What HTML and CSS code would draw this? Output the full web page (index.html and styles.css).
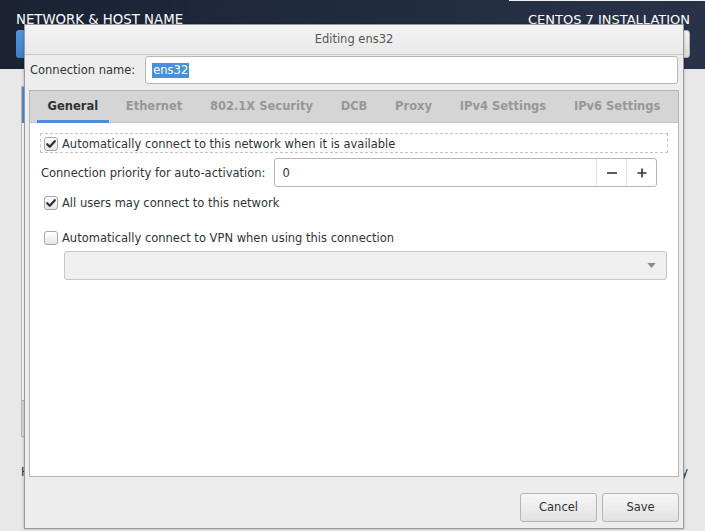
FILE: index.html
```html
<!DOCTYPE html>
<html>
<head>
<meta charset="utf-8">
<link rel="stylesheet" href="styles.css">
</head>
<body>
<div class="screen">
  <header class="topbar">
    <div class="tb-left">
      <div class="tb-title">NETWORK &amp; HOST NAME</div>
      <div class="done-btn">Done</div>
    </div>
    <div class="tb-right">
      <div class="tb-strip"></div>
      <div class="tb-install">CENTOS 7 INSTALLATION</div>
      <div class="kbd-btn">us</div>
    </div>
  </header>
  <main class="spoke">
    <div class="dev-panel">
      <div class="dev-sel"></div>
      <div class="dev-list"></div>
      <div class="dev-tools"></div>
    </div>
    <div class="host-row"><span class="host-label">Host name:</span><span class="apply">Apply</span></div>
  </main>

  <div class="dialog">
    <div class="dlg-title">Editing ens32</div>
    <div class="conn-row">
      <span class="conn-label">Connection name:</span>
      <div class="entry"><span class="sel-text">ens32</span></div>
    </div>
    <div class="notebook">
      <div class="tabs">
        <div class="tab active">General</div>
        <div class="tab">Ethernet</div>
        <div class="tab">802.1X Security</div>
        <div class="tab">DCB</div>
        <div class="tab">Proxy</div>
        <div class="tab">IPv4 Settings</div>
        <div class="tab">IPv6 Settings</div>
      </div>
      <div class="page">
        <div class="cb-row focus">
          <span class="check on"><svg viewBox="0 0 14 14" width="14" height="14"><path d="M3.2 7.2 L5.8 9.8 L10.8 4.2" fill="none" stroke="#2e3436" stroke-width="2.3" stroke-linecap="round" stroke-linejoin="round"/></svg></span>
          <span>Automatically connect to this network when it is available</span>
        </div>
        <div class="prio-row">
          <span class="prio-label">Connection priority for auto-activation:</span>
          <div class="spin">
            <span class="spin-val">0</span>
            <span class="spin-btn">
              <svg viewBox="0 0 12 12" width="12" height="12"><path d="M1 6 H11" stroke="#2e3436" stroke-width="1.6"/></svg>
            </span>
            <span class="spin-btn">
              <svg viewBox="0 0 12 12" width="12" height="12"><path d="M1.5 6 H10.5 M6 1.5 V10.5" stroke="#2e3436" stroke-width="1.6"/></svg>
            </span>
          </div>
        </div>
        <div class="cb-row">
          <span class="check on"><svg viewBox="0 0 14 14" width="14" height="14"><path d="M3.2 7.2 L5.8 9.8 L10.8 4.2" fill="none" stroke="#2e3436" stroke-width="2.3" stroke-linecap="round" stroke-linejoin="round"/></svg></span>
          <span>All users may connect to this network</span>
        </div>
        <div class="cb-row vpn">
          <span class="check"></span>
          <span>Automatically connect to VPN when using this connection</span>
        </div>
        <div class="combo">
          <svg viewBox="0 0 10 6" width="9" height="5"><path d="M0 0 H10 L5 6 Z" fill="#8a8a8a"/></svg>
        </div>
      </div>
    </div>
    <div class="actions">
      <div class="btn">Cancel</div>
      <div class="btn">Save</div>
    </div>
  </div>
</div>
</body>
</html>
```

FILE: styles.css
```css
* { box-sizing: border-box; }
html, body { margin: 0; padding: 0; }
body {
  width: 705px;
  height: 531px;
  overflow: hidden;
  font-family: "DejaVu Sans", "Liberation Sans", sans-serif;
  font-size: 11.5px;
  color: #2e3436;
  background: #e8e8e8;
}
.screen {
  position: relative;
  width: 705px;
  height: 531px;
  display: flex;
  flex-direction: column;
}
.topbar {
  height: 69px;
  flex: none;
  display: flex;
  justify-content: space-between;
  background: linear-gradient(100deg, #1a2234 0%, #212b40 50%, #283349 100%);
}
.tb-left {
  padding: 12px 0 0 16px;
  display: flex;
  flex-direction: column;
  align-items: flex-start;
}
.tb-title {
  color: #ffffff;
  font-size: 13.3px;
  line-height: 16px;
}
.done-btn {
  margin-top: 2px;
  width: 80px;
  height: 28px;
  border-radius: 3px;
  background: linear-gradient(#4f95dc, #3b7fc8);
  color: #fff;
  text-align: center;
  line-height: 28px;
}
.tb-right {
  width: 196px;
  display: flex;
  flex-direction: column;
  align-items: flex-end;
  padding-right: 15px;
}
.tb-strip {
  align-self: stretch;
  margin-right: -15px;
  height: 1px;
  background: #f2f2f2;
}
.tb-install {
  margin-top: 11px;
  color: #ffffff;
  font-size: 13px;
  line-height: 16px;
}
.kbd-btn {
  margin-top: 2px;
  width: 60px;
  height: 28px;
  border-radius: 3px;
  background: linear-gradient(#f4f4f4, #dcdcdc);
  border: 1px solid #b0b0b0;
  color: #2e3436;
  text-align: center;
  line-height: 26px;
}
.spoke {
  flex: 1;
  display: flex;
  flex-direction: column;
  padding: 17px 17px 0 21px;
}
.dev-panel {
  width: 220px;
  height: 351px;
  border: 1px solid #b6b6b6;
  display: flex;
  flex-direction: column;
  background: #ffffff;
}
.dev-sel { height: 36px; background: #4a90d9; }
.dev-list { flex: 1; background: #ffffff; }
.dev-tools { height: 36px; background: #dcdcdc; border-top: 1px solid #b6b6b6; }
.host-row {
  margin-top: 28px;
  display: flex;
  justify-content: space-between;
  line-height: 14px;
  color: #2e3436;
}
.apply { color: #2e3436; }

/* dialog window */
.dialog {
  position: absolute;
  left: 24px;
  top: 24px;
  width: 660px;
  height: 505px;
  border: 1px solid #9a9a9a;
  background: #ededed;
  display: flex;
  flex-direction: column;
  box-shadow: 0 0 3px rgba(0,0,0,0.25);
}
.dlg-title {
  height: 30px;
  flex: none;
  border-bottom: 1px solid #c9c9c9;
  background: linear-gradient(#f3f3f3, #e9e9e9);
  text-align: center;
  line-height: 28px;
  color: #555753;
}
.conn-row {
  flex: none;
  display: flex;
  align-items: center;
  gap: 10px;
  padding: 1px 5px 0 5px;
}
.entry {
  flex: 1;
  height: 28px;
  background: #ffffff;
  border: 1px solid #b6b6b6;
  border-radius: 3px;
  padding-left: 6px;
  display: flex;
  align-items: center;
}
.sel-text {
  background: #4a90d9;
  color: #ffffff;
  line-height: 15px;
  padding: 0 1px;
}
.notebook {
  flex: 1;
  margin: 6px 4px 0 4px;
  border: 1px solid #b6b6b6;
  display: flex;
  flex-direction: column;
  background: #ffffff;
}
.tabs {
  flex: none;
  height: 32px;
  background: #d5d5d5;
  border-bottom: 1px solid #c4c4c4;
  display: flex;
  padding-left: 7px;
  gap: 6.7px;
}
.tab {
  padding: 0 10.5px;
  font-weight: bold;
  color: #959898;
  line-height: 30px;
  border-bottom: 3px solid transparent;
  height: 32px;
  margin-bottom: -1px;
}
.tab.active {
  color: #2e3436;
  border-bottom-color: #4a90d9;
}
.page {
  flex: 1;
  padding: 10px 10px 0 10px;
  display: flex;
  flex-direction: column;
}
.cb-row {
  height: 20px;
  display: flex;
  align-items: center;
  gap: 4px;
  padding-left: 4px;
  padding-top: 1px;
}
.cb-row.focus {
  border: 1px dashed #c4c4c4;
  padding-left: 3px;
}
.check {
  width: 14px;
  height: 14px;
  flex: none;
  border: 1px solid #a6a6a6;
  border-radius: 3px;
  background: linear-gradient(#ffffff, #e6e6e6);
  display: flex;
  align-items: center;
  justify-content: center;
}
.check svg { display: block; margin: -1px; }
.prio-row {
  margin-top: 5px;
  margin-right: 11px;
  display: flex;
  align-items: center;
  gap: 9px;
  padding-left: 1px;
}
.spin {
  flex: 1;
  height: 29px;
  border: 1px solid #b6b6b6;
  border-radius: 3px;
  background: #ffffff;
  display: flex;
  align-items: stretch;
}
.spin-val {
  flex: 1;
  padding-left: 7px;
  display: flex;
  align-items: center;
}
.spin-btn {
  width: 30px;
  border-left: 1px solid #e2e2e2;
  display: flex;
  align-items: center;
  justify-content: center;
}
.prio-row + .cb-row { margin-top: 5px; }
.cb-row.vpn { margin-top: 15px; }
.combo {
  margin: 4px 1px 0 24px;
  height: 29px;
  border: 1px solid #c6c6c6;
  border-radius: 3px;
  background: #efefef;
  display: flex;
  align-items: center;
  justify-content: flex-end;
  padding-right: 10px;
}
.actions {
  flex: none;
  display: flex;
  justify-content: flex-end;
  gap: 5px;
  padding: 16px 4px 6px 0;
}
.btn {
  width: 77px;
  height: 29px;
  border: 1px solid #b4b4b4;
  border-radius: 3px;
  background: linear-gradient(#f6f6f6, #e2e2e2);
  text-align: center;
  line-height: 27px;
  color: #2e3436;
}
```
